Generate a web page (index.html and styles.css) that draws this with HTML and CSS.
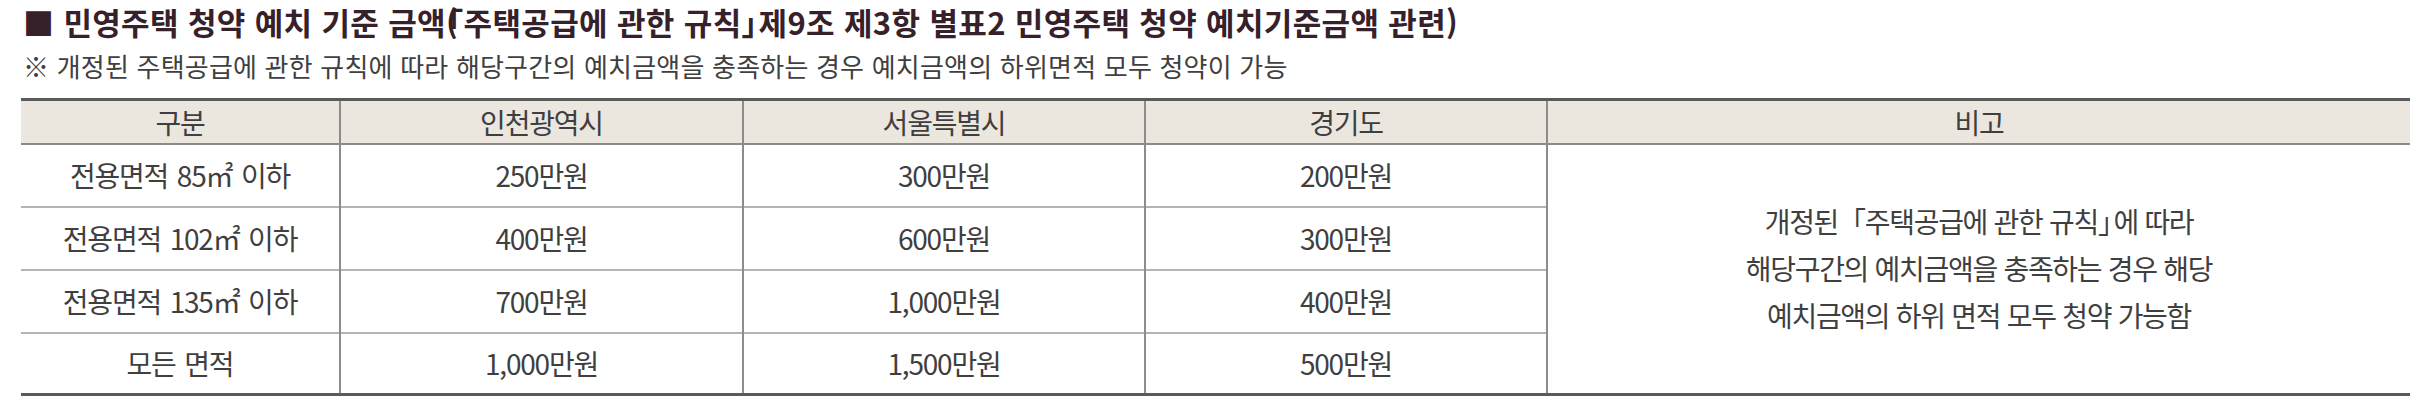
FILE: index.html
```html
<!DOCTYPE html>
<html lang="ko">
<head>
<meta charset="utf-8">
<title>민영주택 청약 예치 기준 금액</title>
<link rel="stylesheet" href="styles.css">
</head>
<body>
<div class="page">
  <h1 class="title">■ 민영주택 청약 예치 기준 금액<span class="pn">(</span>「주택공급에 관한 규칙<span class="br">」</span>제9조 제3항 별표2 민영주택 청약 예치기준금액 관련)</h1>
  <p class="note">※ 개정된 주택공급에 관한 규칙에 따라 해당구간의 예치금액을 충족하는 경우 예치금액의 하위면적 모두 청약이 가능</p>
  <table class="deposit">
    <colgroup>
      <col class="c1">
      <col class="c2">
      <col class="c3">
      <col class="c4">
      <col class="c5">
    </colgroup>
    <thead>
      <tr class="head">
        <th>구분</th>
        <th>인천광역시</th>
        <th>서울특별시</th>
        <th>경기도</th>
        <th>비고</th>
      </tr>
    </thead>
    <tbody>
      <tr class="row">
        <td>전용면적 85㎡ 이하</td>
        <td>250만원</td>
        <td>300만원</td>
        <td>200만원</td>
        <td class="remark" rowspan="4">개정된「주택공급에 관한 규칙<span class="br">」</span>에 따라<br>해당구간의 예치금액을 충족하는 경우 해당<br>예치금액의 하위 면적 모두 청약 가능함</td>
      </tr>
      <tr class="row">
        <td>전용면적 102㎡ 이하</td>
        <td>400만원</td>
        <td>600만원</td>
        <td>300만원</td>
      </tr>
      <tr class="row">
        <td>전용면적 135㎡ 이하</td>
        <td>700만원</td>
        <td>1,000만원</td>
        <td>400만원</td>
      </tr>
      <tr class="row last">
        <td>모든 면적</td>
        <td>1,000만원</td>
        <td>1,500만원</td>
        <td>500만원</td>
      </tr>
    </tbody>
  </table>
</div>
</body>
</html>
```

FILE: styles.css
```css
html, body {
  margin: 0;
  padding: 0;
  background: #ffffff;
}

body {
  font-family: "Noto Sans CJK KR", "Noto Sans", sans-serif;
  color: #3d3d3d;
}

.page {
  padding: 3px 18px 0 21px;
}

.title {
  margin: 0 0 0 2px;
  font-size: 31px;
  line-height: 37px;
  font-weight: 700;
  letter-spacing: 0.35px;
  color: #36212b;
  white-space: nowrap;
}

.pn {
  letter-spacing: -0.32em;
}

.br {
  letter-spacing: -0.45em;
}

.note {
  margin: 10px 0 0 2px;
  font-size: 26px;
  line-height: 32px;
  font-weight: 400;
  letter-spacing: 0.2px;
  color: #404040;
  white-space: nowrap;
}

.deposit {
  margin-top: 16px;
  width: 2389px;
  border-collapse: collapse;
  table-layout: fixed;
  font-size: 28px;
  letter-spacing: -1.2px;
  word-spacing: 2px;
  color: #3f3f3f;
}

.c1 { width: 319px; }
.c2 { width: 403px; }
.c3 { width: 402px; }
.c4 { width: 402px; }
.c5 { width: 863px; }

.deposit th,
.deposit td {
  padding: 0;
  text-align: center;
  vertical-align: middle;
  font-weight: 400;
  line-height: 34px;
  border-left: 2px solid #8c8c8c;
  border-right: 2px solid #8c8c8c;
  white-space: nowrap;
}

.deposit th:first-child,
.deposit td:first-child {
  border-left: none;
}

.deposit th:last-child,
.deposit td.remark {
  border-right: none;
}

.head {
  height: 44px;
  background: #ebe6de;
  border-top: 3px solid #5a5a5a;
  border-bottom: 2px solid #8a8a8a;
}

.row {
  height: 63px;
  border-bottom: 2px solid #b4b4b4;
}

.row.last {
  height: 62px;
  border-bottom: 3px solid #5a5a5a;
}

.deposit td.remark {
  line-height: 47px;
  letter-spacing: -1.3px;
  word-spacing: 0;
  border-bottom: 3px solid #5a5a5a;
}
```
